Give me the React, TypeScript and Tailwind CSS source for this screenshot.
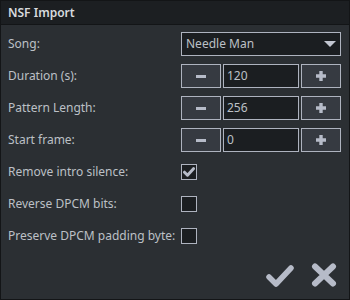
import React from 'react';

const font = { fontFamily: '"Noto Sans", "DejaVu Sans", sans-serif' };

const Label = ({ text }: { text: string }) => (
  <div className="h-6 flex items-center text-[12px] text-[#bcc0c6] whitespace-nowrap">{text}</div>
);

const Minus = () => <div className="w-[10px] h-[3px] bg-[#b6bbc8]" />;

const Plus = () => (
  <svg width="10" height="10" viewBox="0 0 10 10">
    <path d="M3.3 0h3.4v3.3H10v3.4H6.7V10H3.3V6.7H0V3.3h3.3z" fill="#b6bbc8" />
  </svg>
);

const Stepper = ({ value }: { value: string }) => (
  <div className="flex h-6 gap-[2px]">
    <button className="w-[41px] h-6 flex items-center justify-center bg-[#363a41] border border-[#aeb3bf]">
      <Minus />
    </button>
    <div className="w-[78px] h-6 flex items-center px-[3px] bg-[#1b1e21] border border-[#aeb3bf] text-[12px] text-[#bcc0c6]">
      {value}
    </div>
    <button className="w-[41px] h-6 flex items-center justify-center bg-[#363a41] border border-[#aeb3bf]">
      <Plus />
    </button>
  </div>
);

const Check = ({ checked }: { checked?: boolean }) => (
  <div className="h-6 flex items-center">
    <div className="w-4 h-4 bg-[#1b1e21] border border-[#aeb3bf] flex items-center justify-center">
      {checked && (
        <svg width="12" height="10" viewBox="0 0 12 10">
          <path d="M1.5 5.2l3 3 6-6.5" stroke="#b6bbc8" strokeWidth="3" fill="none" strokeLinejoin="round" strokeLinecap="round" />
        </svg>
      )}
    </div>
  </div>
);

export default function App() {
  return (
    <div className="w-[350px] h-[300px] flex flex-col bg-[#2b2f33] border border-[#131517]" style={font}>
      <div className="h-6 flex items-center px-[7px] bg-[#1c1f22] border-b border-[#131517] text-[12px] font-semibold text-[#d7dade]">
        NSF Import
      </div>
      <div className="grid grid-cols-[173px_160px] gap-y-2 px-[7px] pt-[7px]">
        <Label text="Song:" />
        <div className="h-6 flex items-center justify-between pl-[4px] pr-[4px] bg-[#1b1e21] border border-[#aeb3bf] text-[12px] text-[#bcc0c6]">
          <span>Needle Man</span>
          <svg width="12" height="6" viewBox="0 0 12 6">
            <path d="M0 0h12L6 6z" fill="#c3c7d2" />
          </svg>
        </div>
        <Label text="Duration (s):" />
        <Stepper value="120" />
        <Label text="Pattern Length:" />
        <Stepper value="256" />
        <Label text="Start frame:" />
        <Stepper value="0" />
        <Label text="Remove intro silence:" />
        <Check checked />
        <Label text="Reverse DPCM bits:" />
        <Check />
        <Label text="Preserve DPCM padding byte:" />
        <Check />
      </div>
      <div className="flex-1 flex items-end justify-end gap-[17px] pr-[12px] pb-[12px]">
        <svg width="28" height="22" viewBox="0 0 28 22">
          <path d="M3 12l7 7L25 3" stroke="#b6bbc8" strokeWidth="5.5" fill="none" strokeLinejoin="round" strokeLinecap="round" />
        </svg>
        <svg width="26" height="24" viewBox="0 0 26 24">
          <path d="M4 3.5l18 17M22 3.5l-18 17" stroke="#b6bbc8" strokeWidth="6" fill="none" strokeLinecap="round" />
        </svg>
      </div>
    </div>
  );
}
